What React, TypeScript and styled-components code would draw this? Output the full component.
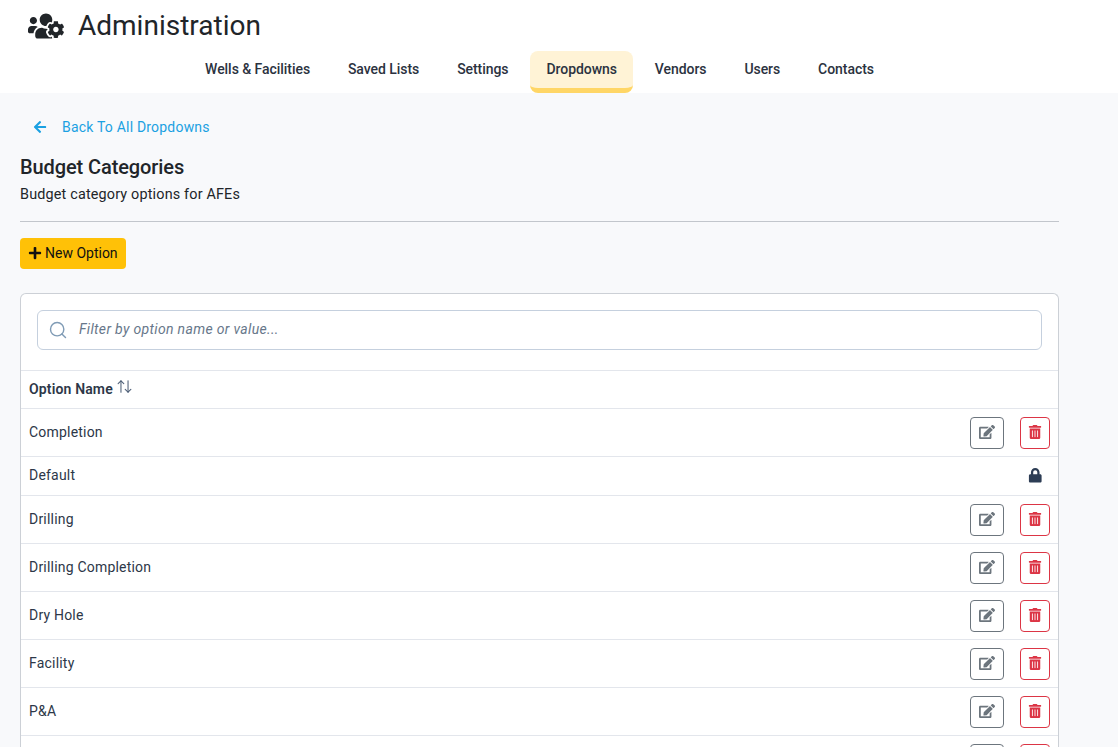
import React from 'react';
import styled, { createGlobalStyle } from 'styled-components';
import { FaArrowLeft, FaEdit, FaLock, FaPlus, FaTrashAlt, FaUsersCog } from 'react-icons/fa';
import { ArrowUpDown, Search } from 'lucide-react';

const GlobalStyle = createGlobalStyle`
  html, body {
    margin: 0;
    height: 100%;
    overflow: hidden;
    background: #f8f9fb;
    font-family: Roboto, "Liberation Sans", sans-serif;
    color: #212529;
  }
  * { box-sizing: border-box; }
`;

const Header = styled.header`
  height: 93px;
  background: #fff;
`;

const TitleRow = styled.div`
  height: 51px;
  display: flex;
  align-items: center;
  padding-left: 28px;
  gap: 14px;
  svg { font-size: 36px; color: #212529; }
`;

const Title = styled.h1`
  margin: 0;
  font-size: 28px;
  font-weight: 400;
  line-height: 51px;
`;

const Tabs = styled.nav`
  display: flex;
  justify-content: center;
  gap: 5.9px;
  height: 42px;
  padding-right: 39px;
`;

const Tab = styled.a<{ $active?: boolean }>`
  display: flex;
  align-items: center;
  padding: 0 16px 2px;
  font-size: 14px;
  font-weight: 500;
  letter-spacing: -0.05px;
  color: #2b3240;
  border-radius: 8px;
  background: ${(p) => (p.$active ? '#fff3d6' : 'transparent')};
  border-bottom: 5px solid ${(p) => (p.$active ? '#ffd666' : 'transparent')};
`;

const Main = styled.main`
  padding: 0 59px 0 20px;
`;

const BackLink = styled.a`
  display: flex;
  align-items: center;
  gap: 15px;
  height: 20px;
  margin: 24px 0 0 13px;
  font-size: 14px;
  letter-spacing: 0.2px;
  color: #1ba1e2;
  svg { font-size: 14px; }
`;

const Heading = styled.h2`
  margin: 18px 0 0;
  font-size: 20px;
  line-height: 24px;
  font-weight: 500;
  letter-spacing: -0.1px;
  color: #212529;
`;

const Description = styled.p`
  margin: 6px 0 0;
  font-size: 14.4px;
  letter-spacing: 0.17px;
  line-height: 20px;
  color: #212529;
`;

const Divider = styled.hr`
  margin: 16px 0 16px;
  border: 0;
  border-top: 1px solid #c2c6cc;
`;

const NewButton = styled.button`
  display: flex;
  align-items: center;
  gap: 3px;
  height: 31px;
  padding: 0 8px 2px;
  border: 0;
  border-radius: 4px;
  background: #ffc107;
  color: #111;
  font-family: inherit;
  font-size: 14px;
  svg { font-size: 14px; }
`;

const Card = styled.section`
  margin-top: 24px;
  background: #fff;
  border: 1px solid #ccd0d6;
  border-bottom: 0;
  border-radius: 6px 6px 0 0;
`;

const SearchWrap = styled.div`
  padding: 16px 16px 20px;
`;

const SearchBox = styled.label`
  display: flex;
  align-items: center;
  gap: 11px;
  height: 40px;
  padding: 0 10px;
  background: #fff;
  border: 1px solid #c5d0de;
  border-radius: 6px;
  svg { color: #7f9bb5; }
`;

const SearchInput = styled.input`
  flex: 1;
  padding: 0 0 2px;
  border: 0;
  outline: 0;
  background: transparent;
  font-family: inherit;
  font-size: 14px;
  font-style: italic;
  letter-spacing: 0.33px;
  &::placeholder { color: #67778a; opacity: 1; }
`;

const Table = styled.table`
  width: 100%;
  border-collapse: collapse;
`;

const HeadCell = styled.th`
  height: 38px;
  padding: 0 8px 4px;
  text-align: left;
  font-size: 14px;
  font-weight: 600;
  letter-spacing: 0.15px;
  color: #2d3748;
  border-top: 1px solid #e3e6ec;
  svg { vertical-align: -1px; margin-left: -1px; color: #4f6078; }
`;

const Row = styled.tr`
  border-top: 1px solid #e3e6ec;
`;

const NameCell = styled.td`
  padding: 0 8px 2px;
  font-size: 14px;
  letter-spacing: 0.2px;
  color: #2d3748;
`;

const ActionCell = styled.td<{ $locked?: boolean }>`
  height: ${(p) => (p.$locked ? '39px' : '48px')};
  padding: ${(p) => (p.$locked ? '0 8px 1px' : '1px 8px 0')};
`;

const Actions = styled.div`
  display: flex;
  justify-content: flex-end;
  align-items: center;
  gap: 16px;
`;

const IconButton = styled.button<{ $danger?: boolean }>`
  display: flex;
  align-items: center;
  justify-content: center;
  width: ${(p) => (p.$danger ? '30px' : '34px')};
  height: 32px;
  padding: 0 0 2px;
  background: #fff;
  border: 1px solid ${(p) => (p.$danger ? '#dc3545' : '#6c757d')};
  border-radius: 4px;
  color: ${(p) => (p.$danger ? '#dc3545' : '#6c757d')};
  font-size: ${(p) => (p.$danger ? '14px' : '16px')};
`;

const LockIcon = styled(FaLock)`
  margin-right: 8px;
  font-size: 14.5px;
  color: #2d3d55;
`;

const tabs = ['Wells & Facilities', 'Saved Lists', 'Settings', 'Dropdowns', 'Vendors', 'Users', 'Contacts'];

const options = [
  { name: 'Completion' },
  { name: 'Default', locked: true },
  { name: 'Drilling' },
  { name: 'Drilling Completion' },
  { name: 'Dry Hole' },
  { name: 'Facility' },
  { name: 'P&A' },
  { name: '' },
];

export default function App() {
  return (
    <>
      <GlobalStyle />
      <Header>
        <TitleRow>
          <FaUsersCog />
          <Title>Administration</Title>
        </TitleRow>
        <Tabs>
          {tabs.map((tab) => (
            <Tab key={tab} $active={tab === 'Dropdowns'}>{tab}</Tab>
          ))}
        </Tabs>
      </Header>
      <Main>
        <BackLink><FaArrowLeft /> Back To All Dropdowns</BackLink>
        <Heading>Budget Categories</Heading>
        <Description>Budget category options for AFEs</Description>
        <Divider />
        <NewButton><FaPlus /> New Option</NewButton>
        <Card>
          <SearchWrap>
            <SearchBox>
              <Search size={20} strokeWidth={1.7} />
              <SearchInput placeholder="Filter by option name or value..." />
            </SearchBox>
          </SearchWrap>
          <Table>
            <thead>
              <tr>
                <HeadCell colSpan={2}>Option Name <ArrowUpDown size={17} strokeWidth={1.5} /></HeadCell>
              </tr>
            </thead>
            <tbody>
              {options.map((option, i) => (
                <Row key={i}>
                  <NameCell>{option.name}</NameCell>
                  <ActionCell $locked={option.locked}>
                    <Actions>
                      {option.locked ? (
                        <LockIcon />
                      ) : (
                        <>
                          <IconButton><FaEdit /></IconButton>
                          <IconButton $danger><FaTrashAlt /></IconButton>
                        </>
                      )}
                    </Actions>
                  </ActionCell>
                </Row>
              ))}
            </tbody>
          </Table>
        </Card>
      </Main>
    </>
  );
}
